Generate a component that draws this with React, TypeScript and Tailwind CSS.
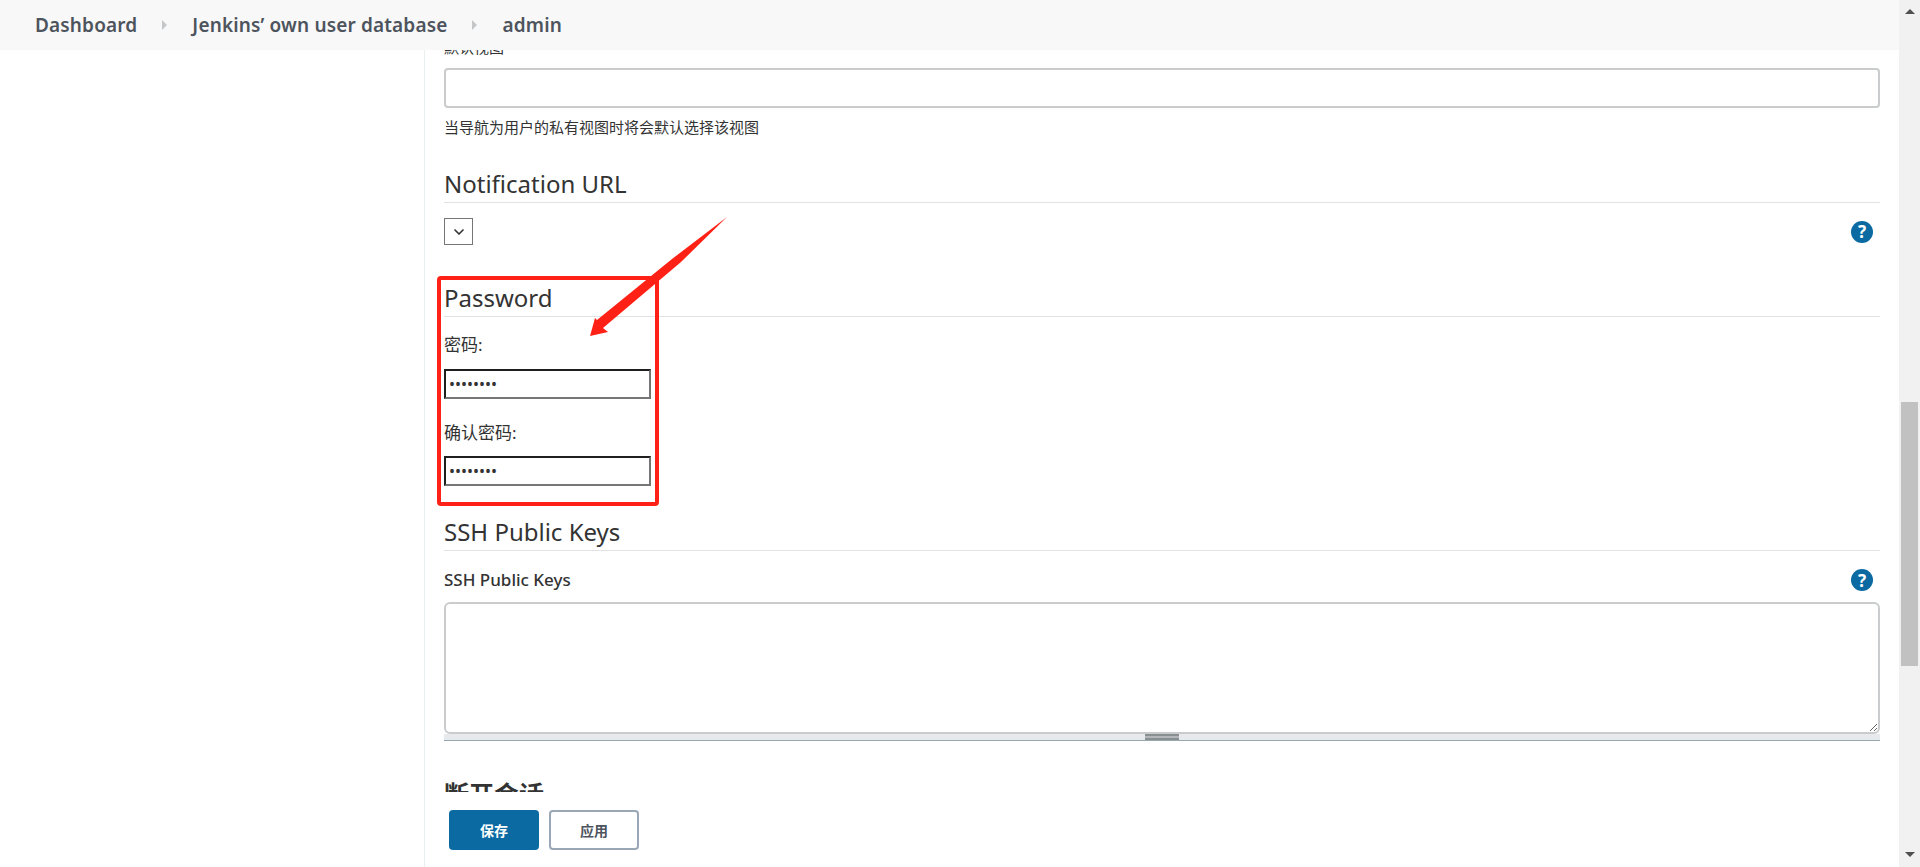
import React from 'react';
import { ChevronDown } from 'lucide-react';

const HelpIcon = () => (
  <span className="mr-[7px] flex h-[22px] w-[22px] items-center justify-center rounded-full bg-[#0b6aa2] text-[17px] leading-none font-bold text-white">
    ?
  </span>
);

const SectionTitle = ({ children }: { children: React.ReactNode }) => (
  <div className="flex h-[36px] items-center border-b border-[#e2e3e4] text-[24px] leading-none text-[#333]">
    <span className="relative top-[-1px]">{children}</span>
  </div>
);

const PasswordInput = () => (
  <input
    type="password"
    readOnly
    defaultValue="12345678"
    className="block h-[30px] w-[207px] border-2 border-t-[#1f1f1f] border-r-[#767676] border-b-[#767676] border-l-[#1f1f1f] bg-white px-[3px] text-[16px] text-[#333] outline-none"
  />
);

const Breadcrumb = () => {
  const items = ['Dashboard', 'Jenkins’ own user database', 'admin'];

  return (
    <div className="flex h-[50px] shrink-0 items-center bg-[#f8f8f8] pl-[35px] text-[19px] leading-none font-semibold tracking-[0.15px] text-[#4d545d]">
      {items.map((item, i) => (
        <React.Fragment key={item}>
          {i > 0 && (
            <span className="mx-[25px] h-0 w-0 border-y-[5px] border-l-[5px] border-y-transparent border-l-[#c4c6c8]" />
          )}
          <span>{item}</span>
        </React.Fragment>
      ))}
    </div>
  );
};

const FakeScrollbar = () => (
  <div className="flex w-[21px] shrink-0 flex-col items-center bg-[#f1f1f1]">
    <div className="mt-[9px] h-0 w-0 border-x-[5px] border-b-[5px] border-x-transparent border-b-[#505050]" />
    <div className="mt-[388px] h-[264px] w-[17px] bg-[#c1c1c1]" />
    <div className="mt-[186px] h-0 w-0 border-x-[5px] border-t-[5px] border-x-transparent border-t-[#505050]" />
  </div>
);

const App = () => {
  return (
    <div className="relative flex h-[867px] w-full overflow-hidden bg-white font-['Noto_Sans','Noto_Sans_CJK_SC',sans-serif] text-[#333]">
      <div className="flex min-w-0 flex-1 flex-col">
        <Breadcrumb />

        <div className="flex min-h-0 flex-1">
          {/* Side panel is empty at this scroll position */}
          <div className="w-[425px] shrink-0 border-r border-[#e9eef1]" />

          <div className="flex min-w-0 flex-1 flex-col pr-[19px] pl-[19px]">
            <div className="min-h-0 flex-1 overflow-hidden">
              <div className="mt-[-13px] text-[15px] leading-[20px]">默认视图</div>
              <input
                readOnly
                className="mt-[11px] block h-[40px] w-full rounded-[4px] border-2 border-[#c9cbcd] bg-white outline-none"
              />
              <div className="mt-[9px] text-[15px] leading-[20px]">当导航为用户的私有视图时将会默认选择该视图</div>

              <div className="mt-[30px]">
                <SectionTitle>Notification URL</SectionTitle>
              </div>
              <div className="mt-[15px] flex items-center justify-between">
                <button className="flex h-[27px] w-[29px] items-center justify-center border border-[#767676] bg-white text-[#333]">
                  <ChevronDown size={16} strokeWidth={2.5} />
                </button>
                <HelpIcon />
              </div>

              <div className="mt-[36px]">
                <SectionTitle>Password</SectionTitle>
              </div>
              <div className="mt-[16px] text-[17px] leading-[24px]">密码:</div>
              <div className="mt-[12px]">
                <PasswordInput />
              </div>
              <div className="mt-[22px] text-[17px] leading-[24px]">确认密码:</div>
              <div className="mt-[11px]">
                <PasswordInput />
              </div>

              <div className="mt-[29px]">
                <SectionTitle>SSH Public Keys</SectionTitle>
              </div>
              <div className="mt-[17px] flex items-center justify-between">
                <span className="text-[17px] leading-[24px] font-medium">SSH Public Keys</span>
                <HelpIcon />
              </div>
              <textarea
                readOnly
                className="mt-[10px] block h-[132px] w-full rounded-[6px] border-2 border-[#c9cbcd] bg-white outline-none"
              />
              <div className="flex h-[7px] justify-center border-b border-[#98a6b0] bg-[#e6eaec]">
                <div className="h-[6px] w-[34px] border-y-2 border-[#8a8f92] bg-[#b4b7b9]" />
              </div>

              <div className="mt-[36px] text-[25px] leading-[34px] font-bold">断开会话</div>
            </div>

            <div className="flex h-[75px] shrink-0 gap-[10px] pt-[18px] pl-[5px]">
              <button className="h-[40px] w-[90px] rounded-[4px] bg-[#0b6aa2] text-[14px] font-bold text-white">
                保存
              </button>
              <button className="h-[40px] w-[90px] rounded-[4px] border-2 border-[#9aa7b4] bg-white text-[14px] font-bold text-[#4d545d]">
                应用
              </button>
            </div>
          </div>
        </div>
      </div>

      <FakeScrollbar />

      {/* Red annotation drawn on top of the screenshot */}
      <div className="absolute top-[276px] left-[437px] h-[230px] w-[222px] rounded-[4px] border-[4px] border-[#ff2116]" />
      <svg className="absolute top-[210px] left-[580px]" width="160" height="135" viewBox="0 0 160 135">
        <polygon points="147,7 92,49 17,110 15,108 10,126 28,122 23,118 101,52" fill="#ff2116" />
      </svg>
    </div>
  );
};

export default App;
